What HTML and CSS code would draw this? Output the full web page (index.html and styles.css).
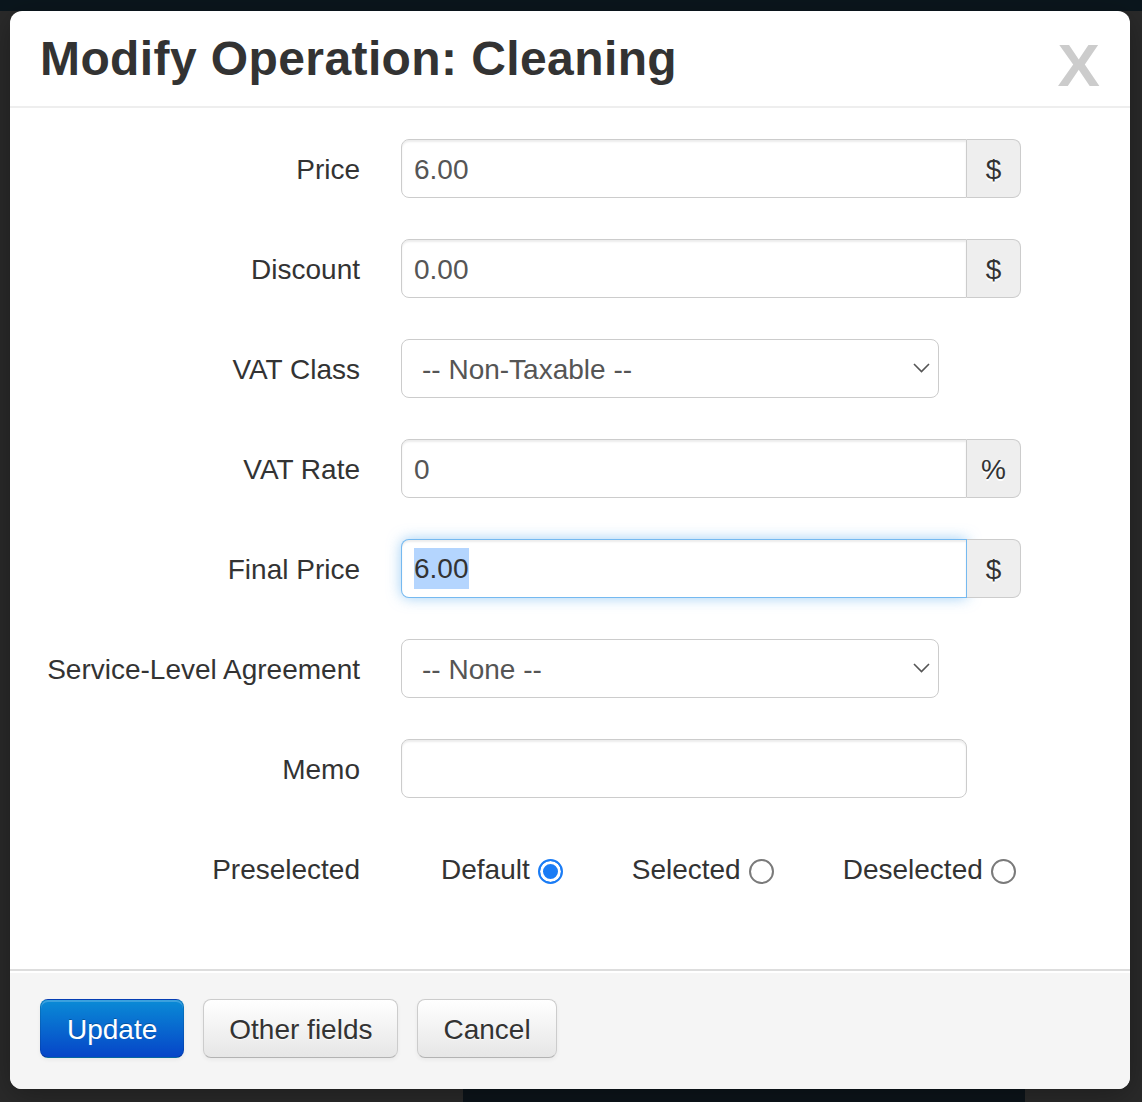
FILE: index.html
```html
<!doctype html>
<html lang="en">
	<head>
		<meta charset="UTF-8" />
		<title>Modify Operation</title>
		<link rel="stylesheet" href="styles.css">
	</head>
	<body>
		<div class="modal">
			<div class="modal-header">
				<h3>Modify Operation: Cleaning</h3>
				<a href="javascript:;" class="close">X</a>
			</div>
			<form class="modal-body">
				<div class="control-group">
					<label class="control-label">Price</label>
					<div class="input-append">
						<input type="text" class="field" value="6.00">
						<span class="add-on">$</span>
					</div>
				</div>
				<div class="control-group">
					<label class="control-label">Discount</label>
					<div class="input-append">
						<input type="text" class="field" value="0.00">
						<span class="add-on">$</span>
					</div>
				</div>
				<div class="control-group">
					<label class="control-label">VAT Class</label>
					<div class="field select">
						<span>-- Non-Taxable --</span>
						<svg width="17" height="10" viewBox="0 0 17 10"><polyline points="1,1 8.5,8.5 16,1" fill="none" stroke="#555" stroke-width="1.6"/></svg>
					</div>
				</div>
				<div class="control-group">
					<label class="control-label">VAT Rate</label>
					<div class="input-append">
						<input type="text" class="field" value="0">
						<span class="add-on">%</span>
					</div>
				</div>
				<div class="control-group">
					<label class="control-label">Final Price</label>
					<div class="input-append">
						<div class="field is-focused"><span class="selected">6.00</span></div>
						<span class="add-on">$</span>
					</div>
				</div>
				<div class="control-group">
					<label class="control-label">Service-Level Agreement</label>
					<div class="field select">
						<span>-- None --</span>
						<svg width="17" height="10" viewBox="0 0 17 10"><polyline points="1,1 8.5,8.5 16,1" fill="none" stroke="#555" stroke-width="1.6"/></svg>
					</div>
				</div>
				<div class="control-group">
					<label class="control-label">Memo</label>
					<input type="text" class="field memo" value="">
				</div>
				<div class="control-group">
					<label class="control-label">Preselected</label>
					<div class="radios">
						<label class="radio">Default <input type="radio" name="presel" checked></label>
						<label class="radio">Selected <input type="radio" name="presel"></label>
						<label class="radio">Deselected <input type="radio" name="presel"></label>
					</div>
				</div>
			</form>
			<div class="modal-footer">
				<a href="javascript:;" class="btn btn-primary">Update</a>
				<a href="javascript:;" class="btn">Other fields</a>
				<a href="javascript:;" class="btn">Cancel</a>
			</div>
		</div>
	</body>
</html>
```

FILE: styles.css
```css
*{
	margin: 0;
	padding: 0;
	box-sizing: border-box;
}
html{
	height: 100%;
	background: #2a2a2a;
}
body{
	min-height: 100%;
	padding: 11px 0 0 10px;
	font-family: "Liberation Sans", Arial, sans-serif;
	font-size: 28px;
	color: #333;
	background:
		linear-gradient(#0b161d, #0b161d) top left / 100% 11px no-repeat,
		linear-gradient(90deg, transparent 463px, #0c141a 463px, #0c141a 1025px, transparent 1025px) bottom left / 100% 13px no-repeat,
		#2a2a2a;
}

/* dialog */
.modal{
	width: 1120px;
	background: #fff;
	border-radius: 12px;
	overflow: hidden;
	box-shadow: 0 6px 30px rgba(0,0,0,.3);
}
.modal-header{
	display: flex;
	justify-content: space-between;
	align-items: flex-start;
	padding: 22px 30px 21px;
	border-bottom: 2px solid #eee;
}
.modal-header h3{
	font-size: 48px;
	line-height: 52px;
	font-weight: bold;
	letter-spacing: .4px;
	color: #333;
}
.close{
	margin: 7px 0 -7px;
	font-size: 60px;
	line-height: 52px;
	font-weight: bold;
	color: #ccc;
	text-decoration: none;
	transform: scaleX(1.06);
	transform-origin: right;
}

.modal-body{
	display: flex;
	flex-direction: column;
	gap: 41px;
	padding: 31px 30px 71px;
}
.control-group{
	display: flex;
	align-items: center;
	height: 59px;
	padding-top: 2px;
}
.control-label{
	width: 320px;
	margin-right: 41px;
	text-align: right;
	color: #333;
}

/* inputs */
.field{
	height: 59px;
	margin-top: -2px;
	padding: 2px 12px 0;
	font: inherit;
	color: #555;
	background: #fff;
	border: 1px solid #ccc;
	border-radius: 8px;
	box-shadow: inset 0 2px 2px rgba(0,0,0,.075);
	outline: none;
}
.input-append{
	display: flex;
	margin-top: -2px;
}
.input-append .field{
	width: 566px;
	margin-top: 0;
	border-radius: 8px 0 0 8px;
}
.add-on{
	display: flex;
	align-items: center;
	justify-content: center;
	width: 54px;
	height: 59px;
	padding-top: 2px;
	background: #eee;
	border: 1px solid #ccc;
	border-left: 0;
	border-radius: 0 8px 8px 0;
	text-shadow: 0 2px 0 #fff;
	color: #333;
}
.field.is-focused{
	display: flex;
	align-items: center;
	padding-top: 0;
	border-color: rgba(82,168,236,.8);
	box-shadow: inset 0 2px 2px rgba(0,0,0,.075), 0 0 14px rgba(82,168,236,.55);
}
.selected{
	display: inline-block;
	line-height: 40px;
	padding-top: 1px;
	background: #b4d5fe;
	color: #333;
}
.select{
	display: flex;
	align-items: center;
	justify-content: space-between;
	width: 538px;
	padding: 2px 8px 0 20px;
	box-shadow: none;
}
.select svg{
	display: block;
	margin-top: -4px;
}
.memo{
	width: 566px;
}

/* radio row */
.radios{
	display: flex;
	align-items: center;
	gap: 69px;
	padding-left: 40px;
}
.radio{
	display: flex;
	align-items: center;
	gap: 8px;
	color: #333;
}
.radio input{
	appearance: none;
	-webkit-appearance: none;
	width: 25px;
	height: 25px;
	margin-top: 4px;
	border: 2px solid #7a7a7a;
	border-radius: 50%;
	background: #fff;
}
.radio input:checked{
	border-color: #1a7cf5;
	background: #1a7cf5;
	box-shadow: inset 0 0 0 3px #fff;
}

/* footer */
.modal-footer{
	display: flex;
	gap: 19px;
	padding: 28px 30px 31px;
	background: #f5f5f5;
	border-top: 2px solid #ddd;
	box-shadow: inset 0 2px 0 #fff;
}
.btn{
	display: inline-block;
	height: 59px;
	padding: 0 25px;
	line-height: 59px;
	font-size: 28px;
	color: #333;
	text-decoration: none;
	text-shadow: 0 1px 1px rgba(255,255,255,.75);
	background: linear-gradient(#fff, #e6e6e6);
	border: 1px solid #ccc;
	border-bottom-color: #b3b3b3;
	border-radius: 8px;
	box-shadow: inset 0 2px 0 rgba(255,255,255,.2), 0 2px 4px rgba(0,0,0,.05);
}
.btn-primary{
	padding: 0 26px;
	color: #fff;
	text-shadow: 0 -1px 0 rgba(0,0,0,.25);
	background: linear-gradient(#0a8bd6, #0645c8);
	border-color: rgba(0,0,0,.1) rgba(0,0,0,.1) rgba(0,0,0,.25);
}
```
